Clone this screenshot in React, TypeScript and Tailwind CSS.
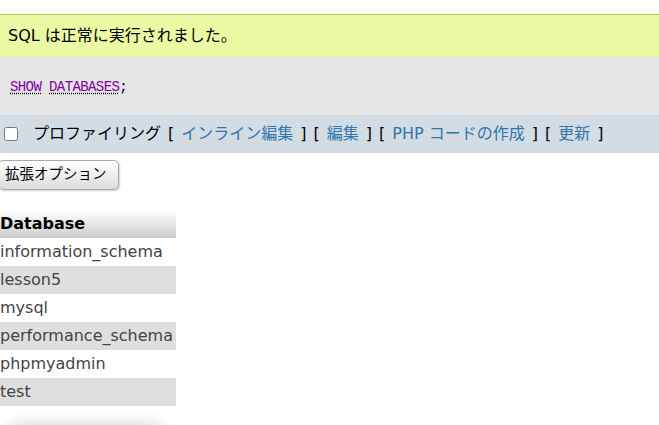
import React from 'react';

const databases = ['information_schema', 'lesson5', 'mysql', 'performance_schema', 'phpmyadmin', 'test'];

const font = { fontFamily: '"DejaVu Sans", "Noto Sans CJK JP", sans-serif' };

const links = ['インライン編集', '編集', 'PHP コードの作成', '更新'];

export default function App() {
  return (
    <div className="min-h-screen bg-white text-[16px] text-black overflow-hidden" style={font}>
      <div className="h-[14px]" />
      {/* success message */}
      <div className="h-[43px] border-t border-[#a2d246] bg-[#ebf8a4] pl-2 flex items-center">
        <span className="leading-none">SQL は正常に実行されました。</span>
      </div>

      {/* query box */}
      <div className="h-[58px] bg-[#e5e5e5] pl-[10px] pt-[3px] flex items-center">
        <code className="text-[14px] tracking-[-0.6px] text-black" style={{ fontFamily: '"Liberation Mono", monospace' }}>
          <span className="text-[#7f00a0] underline decoration-dotted decoration-black underline-offset-2">SHOW</span>{' '}
          <span className="text-[#7f00a0] underline decoration-dotted decoration-black underline-offset-2">DATABASES</span>;
        </code>
      </div>

      {/* options bar */}
      <div className="h-[38px] bg-[#d3dce3] flex items-center gap-[7px] text-[16px]">
        <input type="checkbox" className="ml-[4px] mr-[8px] w-[14px] h-[14px]" />
        <span>プロファイリング</span>
        {links.map((l) => (
          <React.Fragment key={l}>
            <span>[</span>
            <a className="text-[#2f75ae]">{l}</a>
            <span>]</span>
          </React.Fragment>
        ))}
      </div>

      {/* extended options button */}
      <div className="mt-[7px] -ml-[2px]">
        <button className="h-[30px] pl-[6px] pr-[11px] rounded-[5px] border border-[#aaa] bg-gradient-to-b from-white to-[#dcdcdc] text-[14.5px] text-black shadow-[1px_1px_2px_#ccc]">
          拡張オプション
        </button>
      </div>

      {/* results table */}
      <table className="mt-[20px] w-[176px] border-collapse">
        <thead>
          <tr>
            <th className="h-[28px] p-0 text-left font-bold bg-gradient-to-b from-white to-[#cccccc]">Database</th>
          </tr>
        </thead>
        <tbody>
          {databases.map((db, i) => (
            <tr key={db} className={i % 2 === 1 ? 'bg-[#dfdfdf]' : 'bg-white'}>
              <td className="h-[28px] p-0 text-[#444] whitespace-nowrap">{db}</td>
            </tr>
          ))}
        </tbody>
      </table>

      {/* operations fieldset (shadow peeking in) */}
      <div className="mt-[22px] ml-[10px] w-[150px] h-[40px] rounded-md bg-white shadow-[0_0_18px_#bbb]" />
    </div>
  );
}
